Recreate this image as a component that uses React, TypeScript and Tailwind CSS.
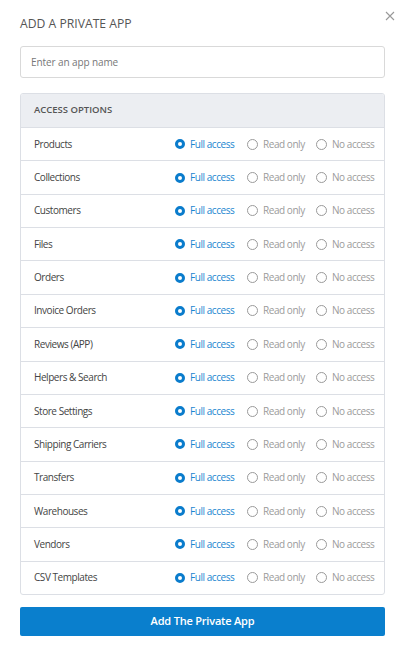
import React from 'react';

const scopes = [
  'Products',
  'Collections',
  'Customers',
  'Files',
  'Orders',
  'Invoice Orders',
  'Reviews (APP)',
  'Helpers & Search',
  'Store Settings',
  'Shipping Carriers',
  'Transfers',
  'Warehouses',
  'Vendors',
  'CSV Templates',
];

function Radio({ checked, label, width }: { checked?: boolean; label: string; width: string }) {
  return (
    <span className={`flex items-center gap-[5px] whitespace-nowrap ${width}`}>
      {checked ? (
        <span className="shrink-0 w-[10px] h-[10px] rounded-full border-[3px] border-[#0a7ccc] bg-white" />
      ) : (
        <span className="shrink-0 w-[11px] h-[11px] rounded-full border border-[#9a9a9a] bg-white" />
      )}
      <span className={checked ? 'text-[#1a86d0]' : 'text-[#9b9b9b]'}>{label}</span>
    </span>
  );
}

export default function App() {
  return (
    <div
      className="relative w-[405px] h-[651px] bg-white px-5 pt-[15px]"
      style={{ fontFamily: '"Open Sans", "Noto Sans", sans-serif' }}
    >
      <button className="absolute right-[10px] top-[11px] text-[#999]">
        <svg width="10" height="10" viewBox="0 0 10 10" stroke="currentColor" strokeWidth="1.1">
          <path d="M1 1l8 8M9 1l-8 8" />
        </svg>
      </button>

      <h1 className="text-[12.2px] leading-[18px] text-[#555] uppercase">Add a private app</h1>

      <input
        className="mt-[13px] w-full h-[32px] border border-[#d9d9d9] rounded-[3px] px-[10px] text-[10px] tracking-[-0.1px] placeholder:text-[#777] outline-none"
        placeholder="Enter an app name"
      />

      <div className="mt-[15px] border border-[#dcdfe5] rounded-[3px] overflow-hidden">
        <div className="h-[33px] bg-[#eceef2] flex items-center px-[13px] text-[9.5px] font-semibold text-[#555]">
          ACCESS OPTIONS
        </div>
        {scopes.map((name) => (
          <div
            key={name}
            className="h-[33.36px] border-t border-[#dcdfe5] flex items-center pl-[13px] text-[10px] tracking-[-0.45px]"
          >
            <span className="w-[141px] text-[#444]">{name}</span>
            <Radio checked label="Full access" width="w-[72px]" />
            <Radio label="Read only" width="w-[69px]" />
            <Radio label="No access" width="flex-1" />
          </div>
        ))}
      </div>

      <button className="mt-[12px] w-full h-[29px] bg-[#0a7fcd] rounded-[2px] text-white text-[11px] font-semibold tracking-[-0.2px]">
        Add The Private App
      </button>
    </div>
  );
}
